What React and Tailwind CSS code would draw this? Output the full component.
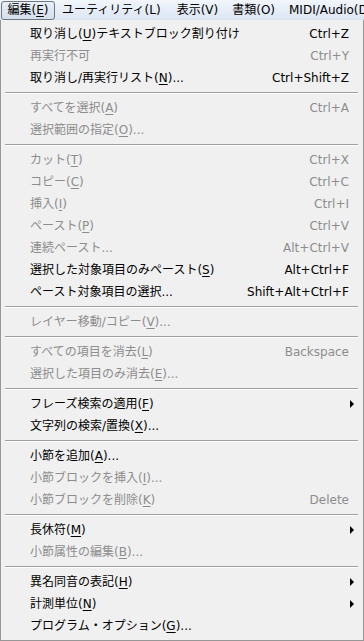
import React from "react";

const F = { fontFamily: '"DejaVu Sans", "Noto Sans CJK JP", sans-serif' };

function Label({ text }) {
  const parts = [];
  const re = /\[(.)\]/g;
  let last = 0;
  let m;
  let k = 0;
  while ((m = re.exec(text))) {
    if (m.index > last) parts.push(<span key={k++}>{text.slice(last, m.index)}</span>);
    parts.push(
      <span key={k++} className="underline underline-offset-[2px]">
        {m[1]}
      </span>
    );
    last = m.index + 3;
  }
  if (last < text.length) parts.push(<span key={k++}>{text.slice(last)}</span>);
  return <span className="whitespace-nowrap">{parts}</span>;
}

const groups = [
  [
    { t: "取り消し([U])テキストブロック割り付け", s: "Ctrl+Z" },
    { t: "再実行不可", s: "Ctrl+Y", d: true },
    { t: "取り消し/再実行リスト([N])...", s: "Ctrl+Shift+Z" },
  ],
  [
    { t: "すべてを選択([A])", s: "Ctrl+A", d: true },
    { t: "選択範囲の指定([O])...", d: true },
  ],
  [
    { t: "カット([T])", s: "Ctrl+X", d: true },
    { t: "コピー([C])", s: "Ctrl+C", d: true },
    { t: "挿入([I])", s: "Ctrl+I", d: true },
    { t: "ペースト([P])", s: "Ctrl+V", d: true },
    { t: "連続ペースト...", s: "Alt+Ctrl+V", d: true },
    { t: "選択した対象項目のみペースト([S])", s: "Alt+Ctrl+F" },
    { t: "ペースト対象項目の選択...", s: "Shift+Alt+Ctrl+F" },
  ],
  [{ t: "レイヤー移動/コピー([V])...", d: true }],
  [
    { t: "すべての項目を消去([L])", s: "Backspace", d: true },
    { t: "選択した項目のみ消去([E])...", d: true },
  ],
  [
    { t: "フレーズ検索の適用([F])", a: true },
    { t: "文字列の検索/置換([X])..." },
  ],
  [
    { t: "小節を追加([A])..." },
    { t: "小節ブロックを挿入([I])...", d: true },
    { t: "小節ブロックを削除([K])", s: "Delete", d: true },
  ],
  [
    { t: "長休符([M])", a: true },
    { t: "小節属性の編集([B])...", d: true },
  ],
  [
    { t: "異名同音の表記([H])", a: true },
    { t: "計測単位([N])", a: true },
    { t: "プログラム・オプション([G])..." },
  ],
];

function Arrow() {
  return (
    <svg width="5" height="8" viewBox="0 0 5 8" className="mr-[-6px] shrink-0">
      <path d="M0 0 L4 4 L0 8 Z" fill="#000" />
    </svg>
  );
}

function Item({ it }) {
  const color = it.d ? "text-[#8d8d8d]" : "text-black";
  return (
    <div className={`flex h-[22px] items-center pl-[29px] pr-[14px] text-[12px] leading-none ${color}`}>
      <div className="flex-1">
        <Label text={it.t} />
      </div>
      {it.s && <div className="whitespace-nowrap">{it.s}</div>}
      {it.a && <Arrow />}
    </div>
  );
}

function Sep() {
  return (
    <div className="flex h-[8px] flex-col justify-center ml-[4px] mr-[5px]">
      <div className="h-px bg-[#a0a0a0]" />
      <div className="h-px bg-white" />
    </div>
  );
}

export default function App() {
  return (
    <div className="w-[364px] h-[641px] overflow-hidden bg-[#f0f0f0]" style={F}>
      <div className="flex h-[20px] items-center overflow-hidden bg-gradient-to-b from-[#f2f6fb] to-[#dbe5f2] text-[12px] leading-none text-black whitespace-nowrap">
        <div className="ml-[1px] flex h-[19px] w-[54px] shrink-0 items-center justify-center rounded-[3px] border border-[#6f7782] bg-gradient-to-b from-[#e9eef6] to-[#d5dfec]">
          <Label text="編集([E])" />
        </div>
        <div className="ml-[7px] shrink-0">
          <Label text="ユーティリティ(L)" />
        </div>
        <div className="ml-[16px] shrink-0">表示(V)</div>
        <div className="ml-[14px] shrink-0">書類(O)</div>
        <div className="ml-[14px] shrink-0">MIDI/Audio(D)</div>
      </div>
      <div className="h-[621px] border-x border-b border-[#979797] bg-[#f0f0f0] pt-[3px]">
        {groups.map((g, gi) => (
          <React.Fragment key={gi}>
            {gi > 0 && <Sep />}
            {g.map((it, i) => (
              <Item key={i} it={it} />
            ))}
          </React.Fragment>
        ))}
      </div>
    </div>
  );
}
